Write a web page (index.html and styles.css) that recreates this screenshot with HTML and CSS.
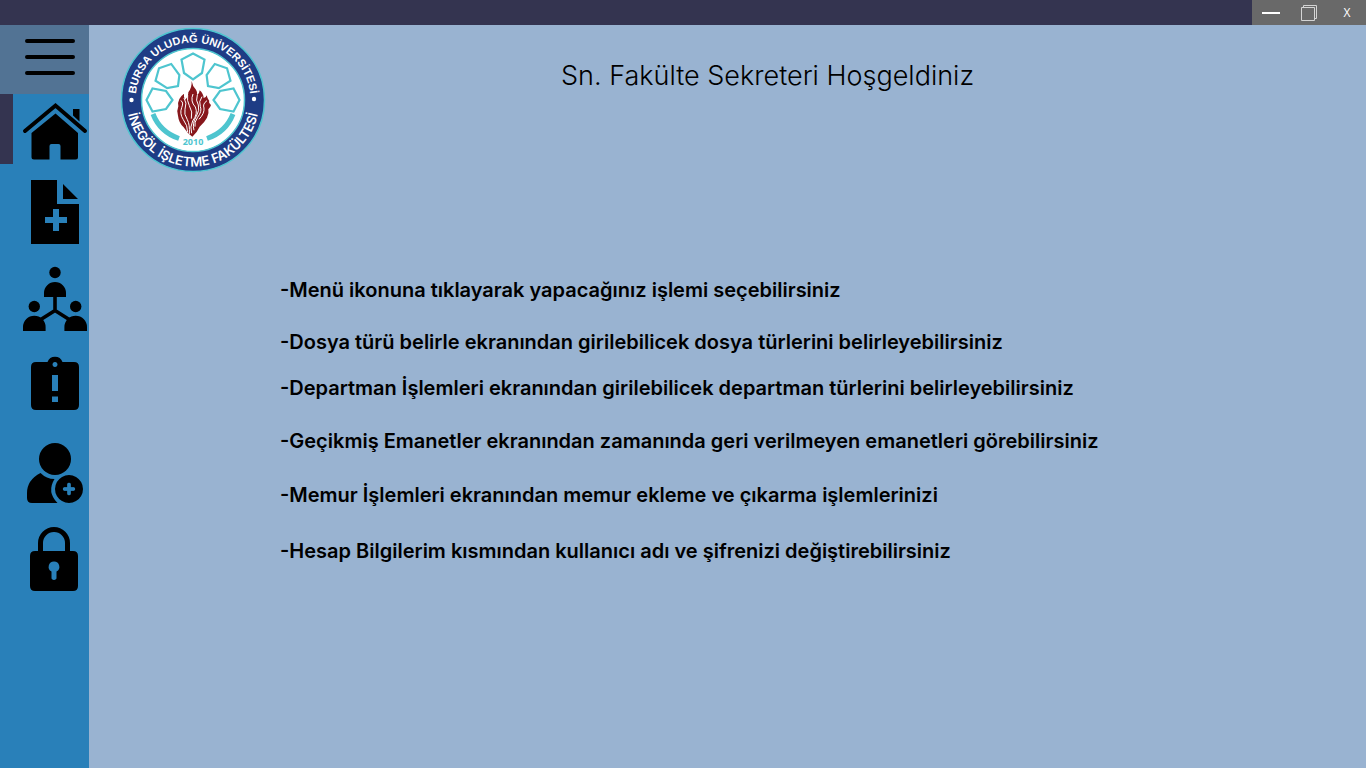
FILE: index.html
```html
<!DOCTYPE html>
<html lang="tr">
<head>
<meta charset="utf-8">
<title>Fakülte Sekreteri</title>
<link rel="stylesheet" href="styles.css">
</head>
<body>
<header class="titlebar">
  <div class="window-controls">
    <button class="window-button" aria-label="Simge durumuna küçült"><svg width="18" height="16" viewBox="0 0 18 16"><path d="M0 8h18" stroke="#fff" stroke-width="2"/></svg></button>
    <button class="window-button" aria-label="Ekranı kapla"><svg width="16" height="16" viewBox="0 0 16 16" fill="none" stroke="#d4d4d4"><path d="M.5 2.500h13v13H.5zM2.500 2.500v-2h13v13h-2"/></svg></button>
    <button class="window-button">X</button>
  </div>
</header>
<div class="shell">
  <nav class="sidebar">
    <button class="menu-button" aria-label="Menü"><svg width="64" height="64" viewBox="23 25 64 64" stroke="#000" stroke-width="4" stroke-linecap="round"><path d="M27 41h46M27 57h46M27 73h46"/></svg></button>
    <button class="nav-button active" aria-label="Ana sayfa"><svg width="64" height="64" viewBox="23 97 64 64"><path d="M73 109h6.500v12.500l-6.500-6z"/><path d="M25 131 55.500 105.500 85 131" fill="none" stroke="#000" stroke-width="4" stroke-linecap="round"/><path d="M55.500 113.500 78 133v24q0 2.500-2.500 2.500H60.500V146q0-2-2-2h-7q-2 0-2 2v13.500H34q-2.500 0-2.500-2.500v-24z"/></svg></button>
    <button class="nav-button" aria-label="Dosya türü belirle"><svg width="64" height="64" viewBox="23 181 64 64"><path fill-rule="evenodd" d="M31 180h26v24h22v40H31zM53 209v8h-8v6h8v8h6v-8h8v-6h-8v-8zM63 184v15h15z"/></svg></button>
    <button class="nav-button" aria-label="Departman işlemleri"><svg width="64" height="64" viewBox="23 267 64 64"><circle cx="55" cy="272.500" r="5.700"/><circle cx="34.300" cy="306.500" r="5.700"/><circle cx="75.700" cy="306.500" r="5.700"/><path d="M44 297v-4a11 11 0 0 1 22 0v4zM23 331v-4a11.300 11.300 0 0 1 22.600 0v4zM64.400 331v-4a11.300 11.300 0 0 1 22.600 0v4z"/><path d="M55 295v15.500L40 320M55 310.500 70 320" fill="none" stroke="#000" stroke-width="3.600"/></svg></button>
    <button class="nav-button" aria-label="Gecikmiş emanetler"><svg width="64" height="64" viewBox="23 353 64 64"><path fill-rule="evenodd" d="M36 362h11.500a8 8 0 0 1 15 0H74q5 0 5 5v38q0 5-5 5H36q-5 0-5-5v-38q0-5 5-5zM52 375v16h6v-16zM52 396.500v5.500h6v-5.500zM55 362a2.500 2.500 0 1 0 .01 0z"/></svg></button>
    <button class="nav-button" aria-label="Memur işlemleri"><svg width="64" height="64" viewBox="23 439 64 64"><circle cx="55" cy="459" r="16"/><path d="M40.500 473q6 6 14 6-8 13 3 24H32q-5 0-5-5v-5q0-13 13.500-20z"/><path fill-rule="evenodd" d="M69 475a14 14 0 1 0 .01 0zM67.500 483.500q1.500-1.500 3 0v4h3.500q2 1.500 0 3h-3.500v4q-1.500 1.500-3 0v-4H64q-2-1.500 0-3h3.500z" /><path d="M69 484.500v9M64.500 489h9" stroke="#2980b9" stroke-width="3.400" stroke-linecap="round"/></svg></button>
    <button class="nav-button" aria-label="Hesap bilgilerim"><svg width="64" height="64" viewBox="23 525 64 64"><path d="M40.500 554V543a13.500 13.500 0 0 1 27 0v11" fill="none" stroke="#000" stroke-width="5"/><path fill-rule="evenodd" d="M35 551h38q5 0 5 5v30q0 5-5 5H35q-5 0-5-5v-30q0-5 5-5zM54 561.500a5.300 5.300 0 0 0-2.500 10v7q2.500 3 5 0v-7a5.300 5.300 0 0 0-2.500-10z"/></svg></button>
  </nav>
  <main class="content">
    <div class="banner">
      <svg class="logo" width="146" height="146" viewBox="-73 -73 146 146" role="img" aria-label="Bursa Uludağ Üniversitesi İnegöl İşletme Fakültesi">
        <defs>
          <path id="arc-top" d="M-57.500 0A57.500 57.500 0 0 1 57.500 0"/>
          <path id="arc-bottom" d="M-66 -6A66.300 66.300 0 1 0 66 -6"/>
          <path id="tile" d="M0-46.500 11.500-40.500 9-27 0-20.500-9-27-11.500-40.500z"/>
        </defs>
        <circle r="71.500" fill="#1e3c85" stroke="#4ec5cf" stroke-width="1.500"/>
        <circle r="51.500" fill="#fff" stroke="#4ec5cf" stroke-width="1.500"/>
        <text class="logo-name"><textPath href="#arc-top" startOffset="50%">BURSA ULUDAĞ ÜNİVERSİTESİ</textPath></text>
        <text class="logo-name lower"><textPath href="#arc-bottom" startOffset="50%">İNEGÖL İŞLETME FAKÜLTESİ</textPath></text>
        <circle cx="-61.500" cy="0" r="2.200" fill="#fff"/><circle cx="61" cy="-1" r="2.200" fill="#fff"/>
        <g fill="none" stroke="#4ec5cf" stroke-width="2.200"><use href="#tile"/><use href="#tile" transform="rotate(-47)"/><use href="#tile" transform="rotate(47)"/><use href="#tile" transform="rotate(-90)"/><use href="#tile" transform="rotate(90)"/></g>
        <path d="M-40 14Q-33 32-14 38.500M40 14Q33 32 14 38.500" fill="none" stroke="#4ec5cf" stroke-width="5"/>
        <g transform="scale(.333) translate(-128 -90)">
          <path fill="#87171c" d="M124 33q2 15 13 26 5 7 3 17 8-6 8-15 11 9 12 23 8-2 9-8 2 10 8 17-3 4 5 12-2 8-8 13 3 13-4 25-8 15-22 27-8 18-22 30-16-10-26-28-15-14-17-35-5-14 1-28-3-10 3-22 4-9 14-16-2 12 4 18 9-8 9-22 11-14 10-34z"/>
          <path fill="none" stroke="#fff" stroke-width="3" d="M91 92q10 4 3 21-7 18 5 36 13 17 13 38M101 84q10 14 3 34-4 14 7 31 8 15 6 43M112 75q-3 17 5 32 11 18 6 39M128 72q-9 22 7 39 9 20-8 42-9 18-3 37M141 75q-6 16 3 30 5 15-6 34-13 21-7 42M155 80q-11 15-5 30 6 13-8 32-11 15-8 28M170 92q-14 10-9 22 2 16-15 34"/>
        </g>
        <text class="logo-year" x="0" y="45">2010</text>
      </svg>
      <h1 class="welcome">Sn. Fakülte Sekreteri Hoşgeldiniz</h1>
    </div>
    <div class="instructions">
      <p>-Menü ikonuna tıklayarak yapacağınız işlemi seçebilirsiniz</p>
      <p>-Dosya türü belirle ekranından girilebilicek dosya türlerini belirleyebilirsiniz</p>
      <p>-Departman İşlemleri ekranından girilebilicek departman türlerini belirleyebilirsiniz</p>
      <p>-Geçikmiş Emanetler ekranından zamanında geri verilmeyen emanetleri görebilirsiniz</p>
      <p>-Memur İşlemleri ekranından memur ekleme ve çıkarma işlemlerinizi</p>
      <p>-Hesap Bilgilerim kısmından kullanıcı adı ve şifrenizi değiştirebilirsiniz</p>
    </div>
  </main>
</div>
</body>
</html>
```
FILE: styles.css
```css
* { box-sizing: border-box; }
body {
  margin: 0;
  min-height: 100vh;
  display: flex;
  flex-direction: column;
  background: #99b3d1;
  color: #000;
  font-family: "Century Gothic", Inter, "Liberation Sans", sans-serif;
}
button { border: 0; padding: 0; background: transparent; color: inherit; font: inherit; }
svg { display: block; overflow: visible; }
.titlebar { height: 25px; display: flex; justify-content: flex-end; background: #343450; }
.window-controls { display: grid; grid-template-columns: repeat(3, 38px); background: #696969; }
.window-button {
  display: flex;
  align-items: center;
  justify-content: center;
  color: #fff;
  font-family: "Open Sans", sans-serif;
  font-size: 12px;
}
.shell { flex: 1; display: flex; }
.sidebar { width: 89px; flex: none; display: flex; flex-direction: column; background: #2980b9; }
.menu-button, .nav-button { display: flex; align-items: center; padding-left: 23px; height: 86px; }
.menu-button { height: 69px; background: #527394; align-items: flex-start; }
.nav-button.active { height: 70px; margin-bottom: 6px; padding-left: 10px; border-left: 13px solid #343450; }
.content { flex: 1; min-width: 0; }
.banner { display: flex; align-items: flex-start; padding: 2px 0 0 31px; }
.welcome { margin: 32px 0 0; padding-left: 295px; font-size: 27px; line-height: 34px; font-weight: 300; }
.instructions {
  display: grid;
  grid-template-rows: 52px 46px 53px 54px 56px auto;
  padding: 105px 24px 24px 191px;
  font-size: 20px;
  line-height: 24px;
  font-weight: 600;
}
.instructions p { margin: 0; }
.logo-name { fill: #fff; font: bold 11px "Liberation Sans", sans-serif; text-anchor: middle; }
.logo-name.lower { font: 600 13px Inter, sans-serif; }
.logo-year { fill: #4ec5cf; font: bold 9px "Open Sans", sans-serif; text-anchor: middle; }
```
